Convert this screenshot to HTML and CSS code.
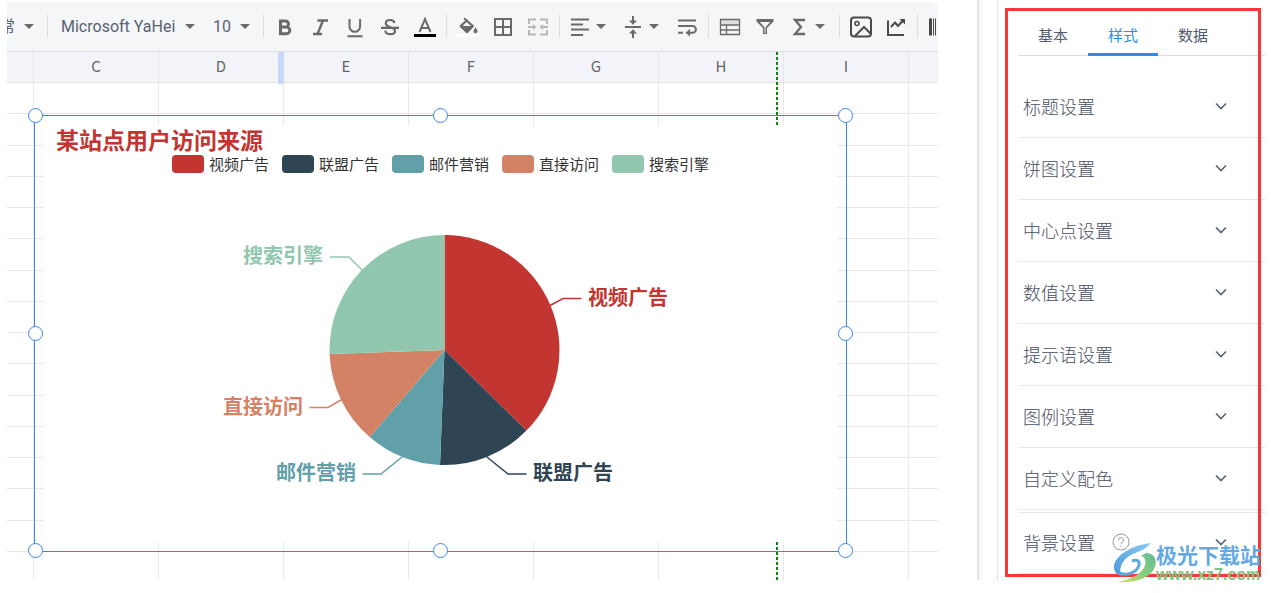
FILE: index.html
```html
<!DOCTYPE html>
<html lang="zh-CN">
<head>
<meta charset="utf-8">
<title>图表样式设置</title>
<link rel="stylesheet" href="styles.css">
</head>
<body>
<main class="editor">
  <div class="toolbar" role="toolbar" aria-label="工具栏">
    <label class="pick pick-format"><select aria-label="格式"><option>常</option></select><i class="caret"></i></label>
    <span class="sep sep-wide"></span>
    <label class="pick pick-font"><select aria-label="字体"><option>Microsoft YaHei</option></select><i class="caret"></i></label>
    <label class="pick pick-size"><select aria-label="字号"><option>10</option></select><i class="caret"></i></label>
    <span class="sep"></span>
    <button class="tool" aria-label="加粗"><svg viewBox="0 0 24 24"><path fill="none" stroke="currentColor" stroke-width="3" d="M7.500 6h5a3 3 0 0 1 0 6h-5zM7.500 12h6a3.300 3.300 0 0 1 0 6.700h-6z"/></svg></button>
    <button class="tool" aria-label="斜体"><svg viewBox="0 0 24 24"><path fill="none" stroke="currentColor" stroke-width="2.400" d="M9.500 5.500H20M5 19h9M15 5.500L9.500 19"/></svg></button>
    <button class="tool" aria-label="下划线"><svg viewBox="0 0 24 24"><path fill="none" stroke="currentColor" stroke-width="2" d="M6.500 4v7.500a5.300 5.300 0 0 0 10.600 0V4M4.500 21.200h15"/></svg></button>
    <button class="tool" aria-label="删除线"><svg viewBox="0 0 24 24"><path fill="none" stroke="currentColor" stroke-width="2.200" d="M3 12.800h18M16.500 8c-.4-2-2-3-4.400-3-2.600 0-4.300 1.200-4.300 3.200 0 5 9.200 3 9.200 7.700 0 2.200-2 3.300-4.800 3.300-2.900 0-4.700-1.200-4.900-3.700"/></svg></button>
    <button class="tool" aria-label="文字颜色"><svg viewBox="0 0 24 24"><path fill="none" stroke="currentColor" stroke-width="2" d="M6.500 17L12 4l5.500 13M8.500 13h7"/><path fill="#000" d="M1 19h22v3H1z"/></svg></button>
    <span class="sep"></span>
    <button class="tool" aria-label="填充颜色"><svg viewBox="0 0 24 24"><path fill="currentColor" fill-rule="evenodd" d="M7.500 4l1.400-1.400 8.600 7.600c.6.600.6 1.300 0 1.900l-5.600 5.600c-.6.600-1.400.6-2 0L4 12.100c-.6-.6-.6-1.300 0-1.900l5.200-4.700zM10.600 6.900L6.500 11h8.600zM19.500 12.500s2 2.400 2 3.700a2 2 0 0 1-4 0c0-1.300 2-3.700 2-3.700z"/><path fill="#fff" d="M1 19h22v3H1z"/></svg></button>
    <button class="tool" aria-label="边框"><svg viewBox="0 0 24 24"><path fill="none" stroke="currentColor" stroke-width="2" d="M4 4h16v16H4zM12 4v16M4 12h16"/></svg></button>
    <button class="tool tool-off" aria-label="合并单元格"><svg viewBox="0 0 24 24"><path fill="none" stroke="currentColor" stroke-width="2" d="M10 4.500H3V9M14 4.500h7V9M10 19.500H3V15M14 19.500h7V15M2 12h6M22 12h-6"/><path fill="currentColor" d="M7 9l3.500 3L7 15zM17 9l-3.500 3 3.500 3z"/></svg></button>
    <span class="sep"></span>
    <button class="tool tool-menu" aria-label="水平对齐"><svg viewBox="0 0 24 24"><path fill="none" stroke="currentColor" stroke-width="2" d="M3 4.500h18M3 9.500h12M3 14.500h18M3 20h12"/></svg><i class="caret"></i></button>
    <button class="tool tool-menu" aria-label="垂直对齐"><svg viewBox="0 0 24 24"><path fill="none" stroke="currentColor" stroke-width="2" d="M4 12h16M12 1v5M12 23v-5"/><path fill="currentColor" d="M8 5.500h8L12 9.700zM8 18.500h8l-4-4.200z"/></svg><i class="caret"></i></button>
    <button class="tool" aria-label="自动换行"><svg viewBox="0 0 24 24"><path fill="none" stroke="currentColor" stroke-width="2" d="M3 5.500h18M3 11h14.500a3.400 3.400 0 0 1 0 6.800H14M3 17.800h5"/><path fill="currentColor" d="M15 14v7.600l-4.500-3.800z"/></svg></button>
    <span class="sep"></span>
    <button class="tool" aria-label="表格"><svg viewBox="0 0 24 24"><path fill="#dedede" d="M3 5h18v5H3z"/><path fill="none" stroke="currentColor" stroke-width="1.300" d="M2.500 4.500h19v15h-19zM2.500 10h19M2.500 15h19M8.500 10v10"/></svg></button>
    <button class="tool" aria-label="筛选"><svg viewBox="0 0 24 24"><path fill="currentColor" fill-rule="evenodd" d="M3.500 4h17v2.500l-6.500 6.500V19h-4v-6l-6.500-6.500zM6.800 7l4.700 5.200V18h1v-5.800L17.200 7z"/></svg></button>
    <button class="tool tool-menu" aria-label="函数"><svg viewBox="0 0 24 24"><path fill="none" stroke="currentColor" stroke-width="2.300" d="M18 5H8l6 7-6 7h10"/></svg><i class="caret"></i></button>
    <span class="sep"></span>
    <button class="tool tool-dark" aria-label="图片"><svg viewBox="0 0 24 24"><rect x="2" y="2.500" width="20" height="19" rx="3" fill="none" stroke="currentColor" stroke-width="2"/><circle cx="8" cy="8.500" r="2" fill="none" stroke="currentColor" stroke-width="1.600"/><path fill="none" stroke="currentColor" stroke-width="2" d="M6 21l9-9 7 7"/></svg></button>
    <button class="tool tool-dark" aria-label="图表"><svg viewBox="0 0 24 24"><path fill="none" stroke="currentColor" stroke-width="2" d="M4 5.500v14.500H20M7 12l4-4.500 3 3.500 5-5.500"/><path fill="currentColor" d="M15.500 4H21v5.500z"/></svg></button>
    <span class="sep"></span>
    <button class="tool tool-dark" aria-label="条形码"><svg viewBox="0 0 24 24"><path fill="currentColor" d="M2 3.500h3v17H2zM6 3.500h1v17H6zM8 3.500h1v17H8zM11 3.500h2v17h-2zM15 3.500h3v17h-3z"/></svg></button>
  </div>

  <div class="sheet">
    <div class="heads"><span class="head head-first"></span><span class="head">C</span><span class="head head-mark">D</span><span class="head">E</span><span class="head">F</span><span class="head">G</span><span class="head">H</span><span class="head">I</span></div>
    <div class="cells">
      <div class="row"></div><div class="row"></div><div class="row"></div><div class="row"></div><div class="row"></div><div class="row"></div><div class="row"></div><div class="row"></div><div class="row"></div><div class="row"></div><div class="row"></div><div class="row"></div><div class="row"></div><div class="row"></div><div class="row"></div>
    </div>
    <div class="page-break"></div>
    <section class="chart">
      <div class="plot">
        <h2 class="chart-title">某站点用户访问来源</h2>
        <ul class="legend">
          <li><i class="swatch red"></i>视频广告</li>
          <li><i class="swatch navy"></i>联盟广告</li>
          <li><i class="swatch teal"></i>邮件营销</li>
          <li><i class="swatch orange"></i>直接访问</li>
          <li><i class="swatch green"></i>搜索引擎</li>
        </ul>
        <svg class="pie" viewBox="44 181 793 361">
          <path class="s-red" d="M444.500 350V235A115 115 0 0 1 526.500 430.600Z"/>
          <path class="s-navy" d="M444.500 350L526.500 430.600A115 115 0 0 1 440 464.900Z"/>
          <path class="s-teal" d="M444.500 350L440 464.900A115 115 0 0 1 369.700 437Z"/>
          <path class="s-orange" d="M444.500 350L369.700 437A115 115 0 0 1 329.600 354Z"/>
          <path class="s-green" d="M444.500 350L329.600 354A115 115 0 0 1 444.500 235Z"/>
          <path class="lead l-red" d="M550 305.500L563 298.500H581.500"/>
          <path class="lead l-navy" d="M487 457L508 474H526.500"/>
          <path class="lead l-teal" d="M402 457L381 474H362.500"/>
          <path class="lead l-orange" d="M341 400L328 407.500H309.500"/>
          <path class="lead l-green" d="M362 270L349 257H330"/>
          <text class="s-red" x="588" y="305">视频广告</text>
          <text class="s-navy" x="533" y="480">联盟广告</text>
          <text class="s-teal" x="276" y="480">邮件营销</text>
          <text class="s-orange" x="223" y="414">直接访问</text>
          <text class="s-green" x="243" y="263">搜索引擎</text>
        </svg>
      </div>
      <i class="grip n w"></i><i class="grip n"></i><i class="grip n e"></i>
      <i class="grip w"></i><i class="grip e"></i>
      <i class="grip s w"></i><i class="grip s"></i><i class="grip s e"></i>
    </section>
  </div>
</main>
<div class="gutter"></div>
<aside class="panel">
  <div class="tabs" role="tablist">
    <button class="tab" role="tab">基本</button><button class="tab tab-on" role="tab" aria-selected="true">样式</button><button class="tab" role="tab">数据</button>
  </div>
  <div class="groups">
    <button class="group">标题设置<svg class="chev" viewBox="0 0 12 8"><path d="M1 1.500l5 5 5-5"/></svg></button>
    <button class="group">饼图设置<svg class="chev" viewBox="0 0 12 8"><path d="M1 1.500l5 5 5-5"/></svg></button>
    <button class="group">中心点设置<svg class="chev" viewBox="0 0 12 8"><path d="M1 1.500l5 5 5-5"/></svg></button>
    <button class="group">数值设置<svg class="chev" viewBox="0 0 12 8"><path d="M1 1.500l5 5 5-5"/></svg></button>
    <button class="group">提示语设置<svg class="chev" viewBox="0 0 12 8"><path d="M1 1.500l5 5 5-5"/></svg></button>
    <button class="group">图例设置<svg class="chev" viewBox="0 0 12 8"><path d="M1 1.500l5 5 5-5"/></svg></button>
    <button class="group">自定义配色<svg class="chev" viewBox="0 0 12 8"><path d="M1 1.500l5 5 5-5"/></svg></button>
    <button class="group group-last">背景设置<svg class="help" viewBox="0 0 18 18"><circle cx="9" cy="9" r="8"/><path d="M6.500 7.200a2.500 2.500 0 1 1 3.600 2.200c-.8.400-1.100.8-1.100 1.700M9 12.500v1.300"/></svg><svg class="chev" viewBox="0 0 12 8"><path d="M1 1.500l5 5 5-5"/></svg></button>
  </div>
  <div class="frame"></div>
  <div class="brand">
    <svg class="brand-logo" viewBox="0 0 42 42">
      <defs>
        <linearGradient id="blue" x1="0" y1="1" x2="1" y2="0"><stop offset="0" stop-color="#4a98da"/><stop offset="1" stop-color="#8accf2"/></linearGradient>
        <linearGradient id="lime" x1="0" y1="1" x2="1" y2="0"><stop offset="0" stop-color="#dcdc5a"/><stop offset=".5" stop-color="#86cc7c"/><stop offset="1" stop-color="#62bd98"/></linearGradient>
      </defs>
      <path fill="url(#lime)" d="M32 11c9 0 12 8 8 16-5 9-18 14-37 13 16-3 26-9 28-17 1-5 0-8-4-9z"/>
      <path fill="url(#blue)" d="M37 1C18 3 0 14 0 25c0 5 3 8 7 8C4 25 10 15 21 11c6-2 12-5 16-10z"/>
      <path fill="none" stroke="#5ba9dd" stroke-width="3" d="M5 31c7 3 18 0 20-8 1-4-2-6-7-4"/>
    </svg>
    <div class="brand-words"><span class="brand-name">极光下载站</span><span class="brand-url">www.xz7.com</span></div>
  </div>
</aside>
</body>
</html>
```
FILE: styles.css
```css
* { box-sizing: border-box; }
body {
  margin: 0;
  height: 100vh;
  padding: 0 0 13px 7px;
  display: flex;
  overflow: hidden;
  background: #fff;
  font-family: "Noto Sans CJK SC", sans-serif;
}
button, select {
  appearance: none;
  border: 0;
  padding: 0;
  margin: 0;
  background: none;
  font: inherit;
  color: inherit;
}
.editor {
  flex: 1;
  min-width: 0;
  margin: 2px 39px 0 0;
  display: flex;
  flex-direction: column;
  overflow: hidden;
}

/* toolbar */
.toolbar {
  height: 50px;
  flex: none;
  display: flex;
  align-items: center;
  background: #f4f6f8;
  border-bottom: 1px solid #dcdee0;
  border-top-right-radius: 6px;
  color: #6a6a6a;
  overflow: hidden;
}
.pick { display: flex; align-items: center; gap: 9px; flex: none; }
.pick select {
  font: 16px Roboto, "Noto Sans CJK SC", sans-serif;
  line-height: 24px;
  color: #596273;
}
.pick-format { margin-left: -8px; }
.pick-format select { width: 16px; }
.pick-font select { width: 115px; }
.pick-size { margin: 0 9px 0 18px; }
.pick-size select { width: 18px; }
.caret {
  flex: none;
  border: 5px solid transparent;
  border-top-color: #6a6a6a;
  border-bottom: 0;
}
.sep { flex: none; width: 1px; height: 23px; margin: 0 3px 0 4px; background: #dcdee0; }
.sep-wide { margin: 0 13px; }
.tool {
  flex: none;
  width: 35px;
  height: 36px;
  display: flex;
  align-items: center;
  justify-content: center;
}
.tool svg { width: 24px; height: 24px; flex: none; }
.tool-menu { width: 53px; padding: 0 10px 0 5px; gap: 4px; }
.tool-off { color: #b5b7b9; }
.tool-dark { color: #4a4a4a; }

/* sheet */
.sheet {
  position: relative;
  flex: 1;
  display: flex;
  flex-direction: column;
}
.heads {
  flex: none;
  display: flex;
  height: 31px;
  background: #f3f4f9;
  border-bottom: 1px solid #e4e5e8;
}
.head {
  position: relative;
  flex: none;
  width: 125px;
  border-right: 1px solid #e6e6ea;
  text-align: center;
  font-size: 15px;
  line-height: 27px;
  color: #666;
}
.head-first { width: 27px; }
.head-mark::after {
  content: "";
  position: absolute;
  right: -1px;
  top: 0;
  width: 6px;
  height: 32px;
  background: #c7d8fa;
}
.cells {
  flex: 1;
  display: grid;
  grid-template-rows: repeat(15, 1fr);
  padding-bottom: 28px;
  background: repeating-linear-gradient(90deg, #e9e9e9 0 1px, transparent 1px 125px) 26px 0;
}
.row { border-bottom: 1px solid #e8e8e8; }
.page-break {
  position: absolute;
  left: 769px;
  top: 0;
  bottom: 0;
  width: 2px;
  background: repeating-linear-gradient(#078a07 0 3px, transparent 3px 5px);
}

/* chart object */
.chart {
  position: absolute;
  left: 27px;
  top: 63px;
  width: 813px;
  height: 437px;
  padding: 9px;
  border: 1px solid #3d85f0;
}
.plot {
  height: 100%;
  display: flex;
  flex-direction: column;
  background: #fff;
}
.chart-title {
  margin: 0 0 0 12px;
  font-size: 23px;
  line-height: 29px;
  font-weight: 700;
  color: #c23531;
}
.legend {
  list-style: none;
  margin: 0;
  padding: 0;
  display: flex;
  justify-content: center;
  gap: 13px;
  font-size: 15px;
  line-height: 20px;
  color: #333;
}
.legend li { display: flex; align-items: center; gap: 5px; }
.swatch { width: 32px; height: 18px; border-radius: 4px; }
.red { background: #c23531; }
.navy { background: #2f4554; }
.teal { background: #61a0a8; }
.orange { background: #d48265; }
.green { background: #91c7ae; }
.pie { width: 100%; margin-top: auto; font-size: 20px; font-weight: 700; }
.s-red { fill: #c23531; }
.s-navy { fill: #2f4554; }
.s-teal { fill: #61a0a8; }
.s-orange { fill: #d48265; }
.s-green { fill: #91c7ae; }
.lead { fill: none; stroke-width: 1.5; }
.l-red { stroke: #c23531; }
.l-navy { stroke: #2f4554; }
.l-teal { stroke: #61a0a8; }
.l-orange { stroke: #d48265; }
.l-green { stroke: #91c7ae; }
.grip {
  position: absolute;
  left: 50%;
  top: 50%;
  width: 15px;
  height: 15px;
  margin: -8px;
  border: 1px solid #3d85f0;
  border-radius: 50%;
  background: #fff;
}
.grip.n { top: 0; }
.grip.s { top: 100%; }
.grip.w { left: 1px; }
.grip.e { left: 100%; }

/* settings panel */
.gutter {
  flex: none;
  width: 20px;
  background: linear-gradient(90deg, #e6e6e6 0 2px, #f4f4f4 2px, #fff 6px);
}
.panel {
  position: relative;
  flex: none;
  width: 274px;
  padding: 16px 6px 0 20px;
  border-left: 1px solid #e6e6e6;
}
.tabs { display: flex; height: 40px; border-bottom: 1px solid #dcdee2; }
.tab {
  width: 70px;
  height: 40px;
  font-size: 15px;
  line-height: 37px;
  border-bottom: 3px solid transparent;
  color: #515a6e;
}
.tab-on { color: #2d8cf0; border-bottom-color: #2d8cf0; }
.groups { margin-top: 20px; }
.group {
  display: flex;
  align-items: center;
  width: 100%;
  height: 62px;
  padding: 0 38px 2px 5px;
  border-bottom: 1px solid #e8eaec;
  font-size: 18px;
  font-weight: 300;
  color: #464f63;
}
.group-last { margin-top: 2px; border-top: 1px solid #e8eaec; }
.chev { width: 12px; height: 8px; margin-left: auto; fill: none; stroke: #5c6475; stroke-width: 1.7; }
.help { width: 18px; height: 18px; margin-left: 17px; fill: none; stroke: #999; stroke-width: 1; }
.frame {
  position: absolute;
  left: 7px;
  right: 10px;
  top: 8px;
  bottom: 3px;
  border: 3px solid #fb3638;
  pointer-events: none;
}
.brand {
  position: absolute;
  right: 10px;
  bottom: -4px;
  display: flex;
  align-items: center;
}
.brand-logo { width: 42px; height: 42px; }
.brand-words { display: flex; flex-direction: column; }
.brand-name { font-size: 21px; line-height: 24px; font-weight: 700; color: #64a9e4; }
.brand-url { font: 700 16px "Liberation Sans", sans-serif; line-height: 18px; color: #79c77d; }
```
